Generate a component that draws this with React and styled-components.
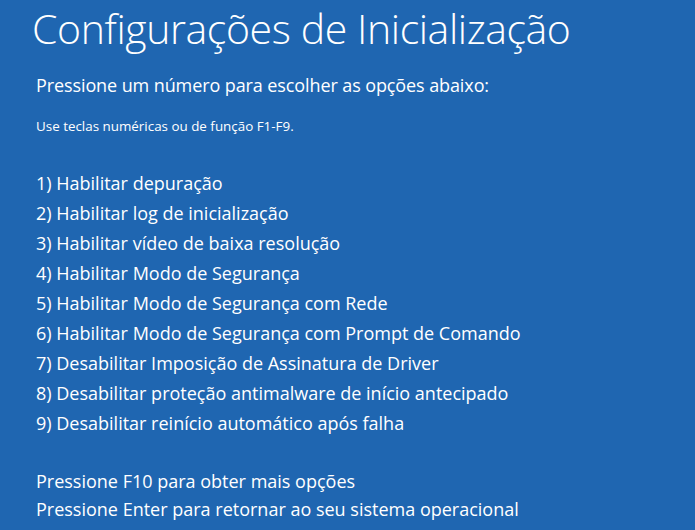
import styled, { createGlobalStyle } from 'styled-components'

const GlobalStyle = createGlobalStyle`
  html, body {
    margin: 0;
    padding: 0;
    background: #1f66b1;
  }
`

const options = [
  'Habilitar depuração',
  'Habilitar log de inicialização',
  'Habilitar vídeo de baixa resolução',
  'Habilitar Modo de Segurança',
  'Habilitar Modo de Segurança com Rede',
  'Habilitar Modo de Segurança com Prompt de Comando',
  'Desabilitar Imposição de Assinatura de Driver',
  'Desabilitar proteção antimalware de início antecipado',
  'Desabilitar reinício automático após falha',
]

export default function App() {
  return (
    <>
      <GlobalStyle />
      <Screen>
        <Title>Configurações de Inicialização</Title>
        <Prompt>Pressione um número para escolher as opções abaixo:</Prompt>
        <Hint>Use teclas numéricas ou de função F1-F9.</Hint>
        <OptionList>
          {options.map((label, i) => (
            <Option key={label}>{i + 1}) {label}</Option>
          ))}
        </OptionList>
        <Footer>
          <Option>Pressione F10 para obter mais opções</Option>
          <Option>Pressione Enter para retornar ao seu sistema operacional</Option>
        </Footer>
      </Screen>
    </>
  )
}

const Screen = styled.main`
  width: 695px;
  height: 530px;
  overflow: hidden;
  background: #1f66b1;
  color: #ffffff;
  font-family: "Open Sans", "Noto Sans", sans-serif;
  padding: 0 0 0 36px;
  box-sizing: border-box;
  display: flex;
  flex-direction: column;
`

const Title = styled.h1`
  margin: 0 0 0 -4px;
  font-weight: 300;
  font-size: 41px;
  line-height: 56px;
  letter-spacing: -0.4px;
`

const Prompt = styled.div`
  margin-top: 16px;
  font-size: 18px;
  line-height: 26px;
  letter-spacing: -0.1px;
`

const Hint = styled.div`
  margin-top: 19px;
  font-size: 13.4px;
  line-height: 18px;
`

const OptionList = styled.div`
  margin-top: 33px;
  display: flex;
  flex-direction: column;
`

const Option = styled.div`
  font-size: 18px;
  line-height: 30px;
`

const Footer = styled.div`
  margin-top: 29px;
  display: flex;
  flex-direction: column;
  & > div {
    line-height: 28px;
  }
`
